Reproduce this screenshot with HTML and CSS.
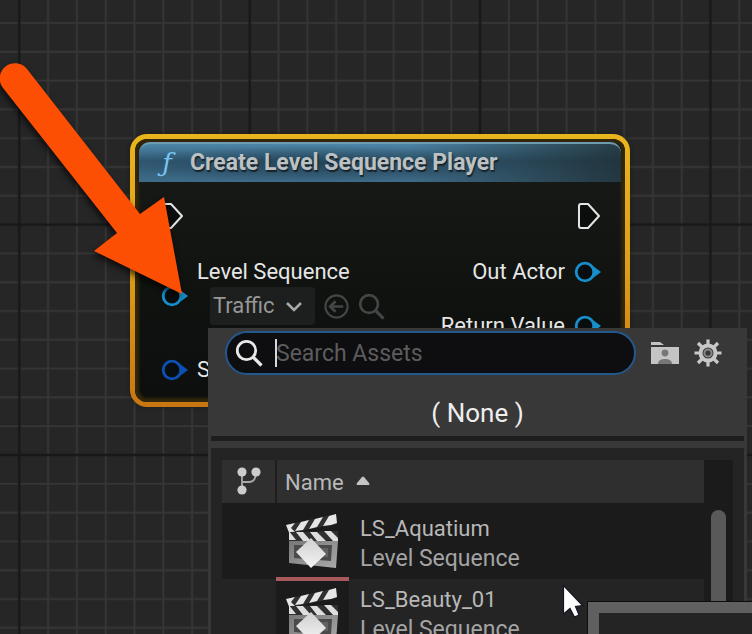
FILE: index.html
```html
<!DOCTYPE html>
<html lang="en">
<head>
<meta charset="utf-8">
<title>Blueprint Graph</title>
<link rel="stylesheet" href="styles.css">
</head>
<body>
<svg class="symbols" aria-hidden="true">
  <symbol id="exec" viewBox="0 0 24 28"><path d="M4 2H11L22 14L11 26H4Q2 26 2 24V4Q2 2 4 2Z" fill="#0c0e0d" stroke="#e4e4e4" stroke-width="2" stroke-linejoin="round"/></symbol>
  <symbol id="pin" viewBox="0 0 28 24"><path d="M20 6L28 12L20 18Q23 12 20 6Z" fill="currentColor"/><circle cx="12" cy="12" r="8.8" fill="#080d10" stroke="currentColor" stroke-width="2.8"/></symbol>
  <symbol id="lens" viewBox="0 0 28 28"><circle cx="11.5" cy="11.5" r="9.2" fill="none" stroke="currentColor" stroke-width="2.8"/><path d="M18 18L26.5 26.5" stroke="currentColor" stroke-width="3.2"/></symbol>
  <symbol id="clapper" viewBox="0 0 54 56">
    <defs>
      <linearGradient id="slate" x1="0" y1="0" x2="1" y2="1"><stop offset="0" stop-color="#777"/><stop offset="1" stop-color="#aaa"/></linearGradient>
      <linearGradient id="gem" x1="0" y1="0" x2="0" y2="1"><stop offset="0" stop-color="#d0d0d0"/><stop offset="1" stop-color="#f4f4f4"/></linearGradient>
    </defs>
    <path d="M0 11L50 0L51 10L3 19Z" fill="#303030"/>
    <path d="M0 11L9 9L5 14L9 18L4 21ZM15 8L23 6L17 16L9 17ZM29 5L37 3L31 13L23 15ZM43 2L50 0L51 9L45 11L37 12Z" fill="#e6e6e6"/>
    <path d="M3 18L52 17V26L3 28Z" fill="#303030"/>
    <path d="M3 17L10 26H3ZM10 18H17L25 27H17ZM24 18H31L40 27H31ZM38 17H45L52 24V27H47Z" fill="#dedede"/>
    <path d="M3 27H52L50 54L3 49Z" fill="url(#slate)"/>
    <path d="M8 31H46L45 47L8 44Z" fill="#4a4a4a"/>
    <path d="M13 34H42V43L13 41Z" fill="#626262"/>
    <path d="M25 24L40 40L25 54L10 38Z" fill="url(#gem)"/>
  </symbol>
</svg>

<main class="graph">
  <svg class="grid" aria-hidden="true">
    <defs>
      <pattern id="cells" width="64" height="64" patternUnits="userSpaceOnUse" patternTransform="translate(19.3 224.6) scale(3.6)">
        <path d="M8 0V64M16 0V64M24 0V64M32 0V64M40 0V64M48 0V64M56 0V64M0 8H64M0 16H64M0 24H64M0 32H64M0 40H64M0 48H64M0 56H64" stroke="#363636" stroke-width=".5"/>
        <path d="M0 0H64M0 64H64M0 0V64M64 0V64" stroke="#181818" stroke-width=".7"/>
      </pattern>
    </defs>
    <rect width="100%" height="100%" fill="url(#cells)"/>
  </svg>

  <article class="node">
    <header class="node-title"><span class="func">ƒ</span><h1>Create Level Sequence Player</h1></header>
    <div class="node-body">
      <div class="inputs">
        <div class="exec-row"><svg class="exec"><use href="#exec"/></svg></div>
        <div class="pin-group">
          <svg class="pin object"><use href="#pin"/></svg>
          <div class="pin-fields">
            <label class="pin-label" for="sequence">Level Sequence</label>
            <div class="picker">
              <span class="select-wrap">
                <select id="sequence"><option>Traffic</option></select>
                <svg class="chevron" viewBox="0 0 18 12"><path d="M2 2L9 9L16 2" fill="none" stroke="#a8a8a8" stroke-width="2.6"/></svg>
              </span>
              <button class="ghost" aria-label="Use selected asset"><svg viewBox="0 0 28 28"><circle cx="14" cy="14" r="11.5" fill="none" stroke="currentColor" stroke-width="2.2"/><path d="M21 14H8M13 8.500L7.500 14L13 19.500" fill="none" stroke="currentColor" stroke-width="2.800"/></svg></button>
              <button class="ghost" aria-label="Browse to asset"><svg><use href="#lens"/></svg></button>
            </div>
          </div>
        </div>
        <div class="pin-row settings"><svg class="pin struct"><use href="#pin"/></svg><span>Settings</span></div>
      </div>
      <div class="outputs">
        <div class="exec-row"><svg class="exec"><use href="#exec"/></svg></div>
        <div class="pin-row"><span>Out Actor</span><svg class="pin object"><use href="#pin"/></svg></div>
        <div class="pin-row"><span>Return Value</span><svg class="pin object"><use href="#pin"/></svg></div>
      </div>
    </div>
  </article>

  <section class="menu">
    <div class="menu-top">
      <label class="search">
        <svg><use href="#lens"/></svg>
        <span class="caret"></span>
        <input type="text" placeholder="Search Assets" aria-label="Search Assets">
      </label>
      <button class="tool folder" aria-label="Show developer content"><svg viewBox="0 0 30 24"><path d="M1 1H10L14 4H1Z" fill="#c4c4c4"/><path d="M1 6H29V23H1Z" fill="#c4c4c4"/><circle cx="15" cy="12" r="3.400" fill="#777"/><path d="M8 23Q8 18 15 18Q22 18 22 23Z" fill="#777"/></svg></button>
      <button class="tool gear" aria-label="View options"><svg viewBox="-14 -14 28 28"><g fill="none" stroke="#c8c8c8"><circle r="7.500" stroke-width="4"/><circle r="3.600" stroke="#888" stroke-width="2"/><path d="M0-9V-13.500M0 9V13.500M-9 0H-13.500M9 0H13.500M-6-6L-10-10M6 6L10 10M-6 6L-10 10M6-6L10-10" stroke-width="3.200"/></g></svg></button>
    </div>
    <button class="none">( None )</button>
    <div class="assets">
      <table>
        <thead><tr>
          <th class="rev" aria-label="Revision control"><svg viewBox="0 0 26 28"><path d="M6 5V23M20 5Q20 15 13 15H6" fill="none" stroke="#aaa" stroke-width="1.800"/><g fill="#ccc"><circle cx="6" cy="5" r="4.600"/><circle cx="20" cy="5" r="4.600"/><circle cx="6" cy="23" r="4.600"/></g></svg></th>
          <th class="name" colspan="2">Name<svg viewBox="0 0 14 10"><path d="M1 9Q0 8 1 7L6 1Q7 0 8 1L13 7Q14 8 13 9Z" fill="#c4c4c4"/></svg></th>
        </tr></thead>
        <tbody>
          <tr class="active"><td></td><td class="thumb"><svg><use href="#clapper"/></svg></td><td class="asset"><strong>LS_Aquatium</strong><span>Level Sequence</span></td></tr>
          <tr><td></td><td class="thumb"><svg><use href="#clapper"/></svg></td><td class="asset"><strong>LS_Beauty_01</strong><span>Level Sequence</span></td></tr>
        </tbody>
      </table>
      <div class="scroll"><div class="handle"></div></div>
    </div>
  </section>

  <div class="tooltip"></div>
  <svg class="pointer" viewBox="0 0 22 34" aria-hidden="true"><path d="M1.500 1.500V30L8 24.500L12.500 33L17 31L13.500 22.500L20.500 21.500Z" fill="#fff" stroke="#15152a" stroke-width="1.200"/></svg>
  <svg class="arrow" viewBox="0 0 200 310" aria-hidden="true"><path d="M27 69L140 214L164 197L182 294L94 251L117 233L3 88A15 15 0 1 1 27 69Z" fill="#fc4f03"/></svg>
</main>
</body>
</html>
```

FILE: styles.css
```css
* { box-sizing: border-box; }
body {
  margin: 0;
  font-family: Roboto, "Liberation Sans", sans-serif;
  font-size: 22px;
  color: #e6e6e6;
  background: #262626;
}
button { padding: 0; border: 0; background: none; color: inherit; font: inherit; }
svg { display: block; flex: none; }
.symbols { position: absolute; width: 0; height: 0; }
.graph { position: relative; height: 100vh; overflow: hidden; }
.grid { position: absolute; inset: 0; width: 100%; height: 100%; }

.node {
  position: absolute;
  left: 130px;
  top: 134px;
  width: 500px;
  height: 273px;
  border: 5px solid transparent;
  border-radius: 17px;
  background:
    linear-gradient(#191b19, #0f120f 60%, #0c0f0e) padding-box,
    linear-gradient(#e9b51d, #dc9d18 50%, #c87611) border-box;
  box-shadow: inset 0 0 3px 4px #33270b, 0 0 4px #15151599;
}
.node-title {
  display: flex;
  align-items: center;
  gap: 13px;
  height: 40px;
  margin: 3px 4px 0;
  padding-left: 18px;
  border-top: 2px solid #6e9cae;
  border-radius: 11px 11px 0 0;
  background:
    linear-gradient(90deg, transparent 55%, #1d2b2fcc),
    radial-gradient(ellipse 210px 18px at 36% 52%, #203847b0, transparent),
    linear-gradient(#4d86a8, #315a75 45%, #3e6b88);
}
.node-title h1 { margin: 0; font-size: 23px; line-height: 28px; font-weight: 700; color: #bcc1c3; text-shadow: 1px 2px 1px #17232b; white-space: nowrap; }
.func { width: 20px; font: italic 26px/32px "DejaVu Serif", serif; color: #76c4f2; text-align: center; }
.node-body { display: flex; justify-content: space-between; padding: 0 24px 0 25px; }
.exec-row { display: flex; align-items: center; height: 68px; margin-bottom: 8px; }
.exec { width: 24px; height: 28px; }
.pin { width: 28px; height: 24px; }
.object { color: #168fcb; }
.struct { color: #0d50b5; }
.pin-row { display: flex; align-items: center; gap: 8px; height: 28px; line-height: 28px; white-space: nowrap; }
.outputs { display: flex; flex-direction: column; align-items: flex-end; }
.outputs .pin-row + .pin-row { margin-top: 26px; }
.pin-group { display: flex; align-items: center; gap: 9px; }
.pin-group > .pin { margin-top: 8px; }
.pin-label { display: block; line-height: 28px; white-space: nowrap; }
.picker { display: flex; align-items: center; gap: 8px; height: 38px; margin: 1px 0 0 13px; }
.select-wrap { position: relative; width: 105px; height: 38px; }
select {
  appearance: none;
  width: 100%;
  height: 100%;
  padding: 0 0 2px 3px;
  border: 0;
  border-radius: 3px;
  background: #1c1f1e;
  color: #979797;
  font: inherit;
}
.chevron { position: absolute; right: 12px; top: 14px; width: 18px; height: 12px; }
.ghost { color: #434645; }
.ghost svg { width: 27px; height: 27px; }
.settings { gap: 9px; margin-top: 31px; }

.menu {
  position: absolute;
  left: 208px;
  right: 5px;
  top: 328px;
  bottom: 0;
  display: flex;
  flex-direction: column;
  padding: 0 3px;
  background: #383838;
}
.menu-top { display: flex; align-items: center; padding: 3px 22px 0 14px; }
.search {
  position: relative;
  display: flex;
  flex: 1;
  align-items: center;
  gap: 13px;
  height: 44px;
  padding: 0 20px 0 8px;
  border: 2px solid #23588f;
  border-radius: 22px;
  background: #0e0e10;
}
.search svg { width: 28px; height: 28px; color: #e8e8e8; }
.search input { flex: 1; min-width: 0; padding: 0; border: 0; outline: 0; background: none; color: #ddd; font: inherit; font-size: 23px; }
.search input::placeholder { color: #5c5c5c; opacity: 1; }
.caret { position: absolute; left: 48px; top: 6px; width: 2px; height: 28px; background: #d8d8d8; }
.tool { margin-left: 14px; }
.folder svg { width: 30px; height: 24px; }
.gear svg { width: 28px; height: 28px; }
.none { height: 61px; font-size: 26px; line-height: 76px; color: #eee; }
.assets {
  display: flex;
  flex: 1;
  align-items: stretch;
  min-height: 0;
  margin-top: 12px;
  padding: 12px 11px 0;
  background: #242424;
  box-shadow: 0 -7px #383838, 0 -12px #1e1e1e;
}
table { flex: 1; height: 0; border-collapse: collapse; color: #b8b8b8; table-layout: fixed; }
thead { border-bottom: 5px solid #1b1b1b; background: #2f2f2f; }
th { height: 45px; padding: 0; font-weight: 400; text-align: left; }
.rev { width: 54px; border-right: 2px solid #1e1e1e; }
.rev svg { width: 26px; height: 28px; margin: 0 auto; }
.name { padding: 2px 0 0 8px; }
.name svg { display: inline-block; width: 14px; height: 10px; margin-left: 12px; vertical-align: 4px; }
td { height: 74px; padding: 0; }
.active { background: #1b1b1b; }
.thumb { width: 73px; background: #1b1b1b; border-bottom: 4px solid #a95a5d; }
.thumb svg { width: 54px; height: 56px; margin: 0 auto; }
.asset { padding: 6px 0 0 11px; vertical-align: top; }
.asset strong, .asset span { display: block; font-weight: 400; line-height: 30px; }
.asset span { font-size: 23px; color: #a4a4a4; }
.scroll { width: 29px; padding: 50px 7px 0; background: #1b1b1b; }
.handle { height: 100%; border-radius: 8px 8px 0 0; background: #595959; }

.tooltip {
  position: absolute;
  left: 588px;
  right: -20px;
  top: 602px;
  bottom: -20px;
  border: 11px solid #606060;
  outline: 1px solid #0d0d0d;
  background: #242424;
}
.pointer { position: absolute; left: 562px; top: 584px; width: 22px; height: 34px; }
.arrow { position: absolute; left: 0; top: 0; width: 200px; height: 310px; filter: drop-shadow(-1px 4px 3px #000a); }
```
